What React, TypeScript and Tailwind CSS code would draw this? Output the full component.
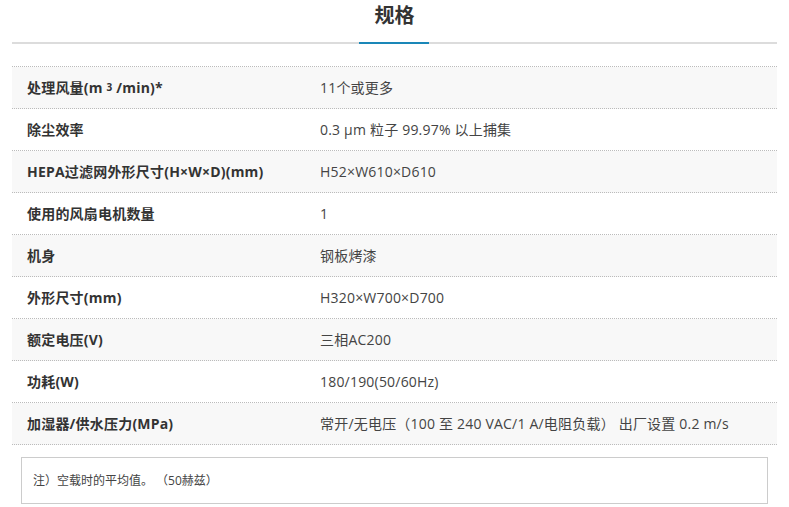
const rows: { label: React.ReactNode; value: string }[] = [
  {
    label: (
      <>
        处理风量(m <sup className="text-[10px] relative -top-[2px]">3</sup> /min)*
      </>
    ),
    value: "11个或更多",
  },
  { label: "除尘效率", value: "0.3 μm 粒子 99.97% 以上捕集" },
  { label: "HEPA过滤网外形尺寸(H×W×D)(mm)", value: "H52×W610×D610" },
  { label: "使用的风扇电机数量", value: "1" },
  { label: "机身", value: "钢板烤漆" },
  { label: "外形尺寸(mm)", value: "H320×W700×D700" },
  { label: "额定电压(V)", value: "三相AC200" },
  { label: "功耗(W)", value: "180/190(50/60Hz)" },
  {
    label: "加湿器/供水压力(MPa)",
    value: "常开/无电压（100 至 240 VAC/1 A/电阻负载） 出厂设置 0.2 m/s",
  },
];

const App = () => {
  return (
    <div
      className="w-[789px] h-[507px] bg-white text-[#333] overflow-hidden"
      style={{ fontFamily: '"Open Sans", "Noto Sans CJK SC", sans-serif' }}
    >
      <div className="px-[12px] pt-[1px]">
        <h2 className="text-center text-[20px] font-bold leading-[30px] text-[#333]">
          规格
        </h2>
        <div className="relative mt-[11px] h-[2px] bg-[#dcdcdc]">
          <div className="absolute left-[347px] top-0 h-[2px] w-[70px] bg-[#1a87b8]" />
        </div>

        <div className="mt-[22px] border-t border-dotted border-[#bbb]">
          {rows.map((row, i) => (
            <div
              key={i}
              className={`grid grid-cols-[308px_1fr] h-[42px] items-center border-b border-dotted border-[#bbb] text-[14px] ${
                i % 2 === 0 ? "bg-[#f8f8f8]" : "bg-white"
              }`}
            >
              <div className="pl-[15px] font-bold text-[#333] whitespace-nowrap tracking-[0.2px]">
                {row.label}
              </div>
              <div className="text-[#444] whitespace-nowrap tracking-[0.2px]">{row.value}</div>
            </div>
          ))}
        </div>

        <div className="mx-[9px] mt-[12px] h-[47px] border border-[#ccc] flex items-center px-[11px] text-[12px] text-[#444]">
          注）空载时的平均值。 （50赫兹）
        </div>
      </div>
    </div>
  );
};

export default App;
